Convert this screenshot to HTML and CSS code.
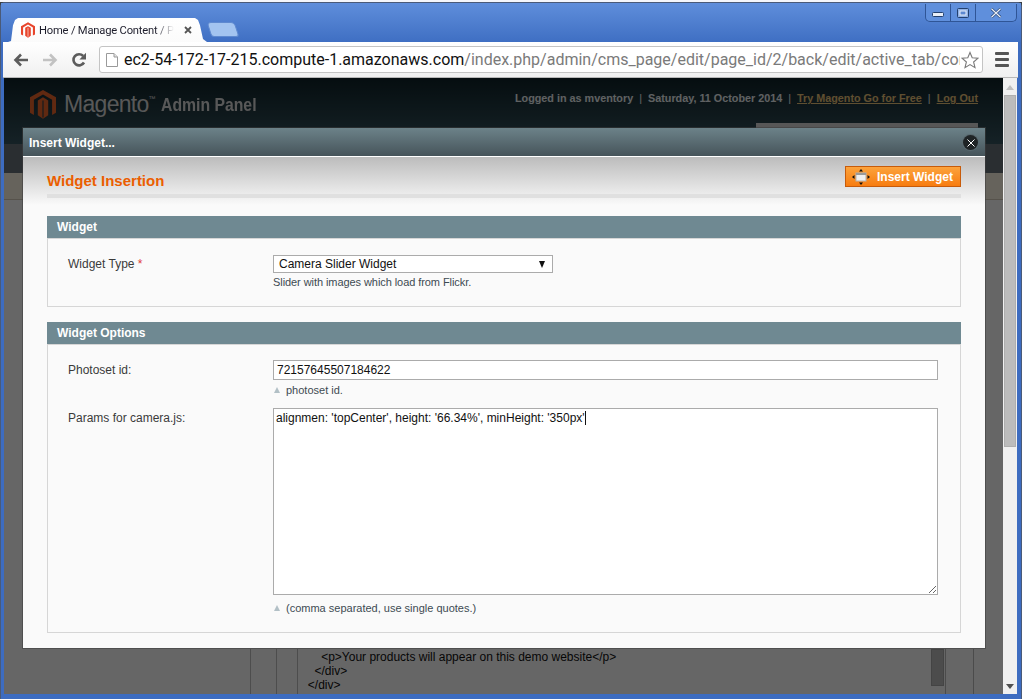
FILE: index.html
```html
<!DOCTYPE html>
<html lang="en">
<head>
<meta charset="utf-8">
<title>Home / Manage Content / Pages</title>
<link rel="stylesheet" href="styles.css">
</head>
<body>
<div class="desktop-strip"></div>
<div class="window">
  <div class="titlebar">
    <div class="tab">
      <svg class="favicon" viewBox="0 0 16 18" width="14" height="16"><path d="M8 0 16 4.6V14L13.6 15.4V6L8 2.8 2.4 6V15.4L0 14V4.6Z" fill="#e8452c"/><path d="M8 4.600 11.200 6.500V15.600L8 17.800 4.800 15.600V6.500Z" fill="#e8452c"/><path d="M8 6.500V16.800" stroke="#fff" stroke-width=".7"/></svg>
      <span class="tab-title">Home / Manage Content / Pages</span>
      <svg class="tab-close" viewBox="0 0 8 8" width="8" height="8"><path d="M1 1 7 7M7 1 1 7" stroke="#555" stroke-width="1.8"/></svg>
    </div>
    <div class="new-tab"></div>
    <div class="win-controls">
      <div class="win-btn win-min"><svg viewBox="0 0 12 6" width="12" height="6"><rect x=".5" y=".5" width="11" height="4" rx="1" fill="#e8eef8" stroke="#23406e"/></svg></div>
      <div class="win-btn win-max"><svg viewBox="0 0 12 10" width="12" height="10"><rect x=".5" y=".5" width="11" height="9" rx="1" fill="#8fb0e4" stroke="#23406e"/><rect x="3" y="3" width="6" height="4" fill="#5c88d0" stroke="#e8eef8"/></svg></div>
      <div class="win-btn win-close"><svg viewBox="0 0 12 10" width="12" height="10"><path d="M1.500 .8 10.500 9.200M10.500 .8 1.500 9.200" stroke="#23406e" stroke-width="2.600"/><path d="M1.500 .8 10.500 9.200M10.500 .8 1.500 9.200" stroke="#e8eef8" stroke-width="1.300"/></svg></div>
    </div>
  </div>
  <div class="toolbar">
    <svg class="tool-icon" viewBox="0 0 16 14" width="16" height="14"><path d="M15 7H3M8 1.500 2.500 7 8 12.500" fill="none" stroke="#5c5c5c" stroke-width="2.600"/></svg>
    <svg class="tool-icon" viewBox="0 0 16 14" width="16" height="14"><path d="M1 7H13M8 1.500 13.500 7 8 12.500" fill="none" stroke="#c2c2c2" stroke-width="2.600"/></svg>
    <svg class="tool-icon" viewBox="0 0 16 16" width="16" height="16"><path d="M13 10.500A5.600 5.600 0 1 1 12.200 4" fill="none" stroke="#5c5c5c" stroke-width="2.600"/><path d="M15 .8V7.500H8.400Z" fill="#5c5c5c"/></svg>
    <div class="omnibox">
      <svg class="page-icon" viewBox="0 0 12 14" width="12" height="14"><path d="M.5.5H8L11.500 4V13.500H.5Z" fill="#fff" stroke="#9a9a9a"/><path d="M8 .5V4H11.500" fill="#e4e4e4" stroke="#9a9a9a"/></svg>
      <div class="url"><span class="url-host">ec2-54-172-17-215.compute-1.amazonaws.com</span>/index.php/admin/cms_page/edit/page_id/2/back/edit/active_tab/content/</div>
      <svg class="star" viewBox="0 0 18 18" width="18" height="18"><path d="M9 1.500 11.200 6.800 17 7.200 12.600 11 14 16.600 9 13.600 4 16.600 5.400 11 1 7.200 6.800 6.800Z" fill="#fff" stroke="#7a7a7a" stroke-width="1.100"/></svg>
    </div>
    <div class="menu-icon"><span></span><span></span><span></span></div>
  </div>
  <div class="viewport">
    <div class="page">
      <header class="admin-header">
        <div class="logo">
          <svg viewBox="0 0 16 18" width="26" height="31"><path d="M8 0 16 4.600V14L13.600 15.400V6L8 2.800 2.400 6V15.400L0 14V4.600Z" fill="#f0662c"/><path d="M8 4.600 11.200 6.500V15.600L8 17.800 4.800 15.600V6.500Z" fill="#f0662c"/><path d="M8 6.500V17" stroke="#2a444c" stroke-width=".7"/></svg>
          <span class="logo-name">Magento<sup class="tm">™</sup></span>
          <span class="logo-sub">Admin Panel</span>
        </div>
        <div class="header-right">
          <div class="header-links">
            <span>Logged in as mventory</span><i>|</i><span>Saturday, 11 October 2014</span><i>|</i><a class="go">Try Magento Go for Free</a><i>|</i><a class="go">Log Out</a>
          </div>
          <div class="search-box"></div>
        </div>
      </header>
      <div class="nav-bar"></div>
      <div class="tan-bar"></div>
      <div class="page-body">
        <div class="col-lines">
          <div class="col-a"></div>
          <div class="col-b"></div>
          <pre class="code">    &lt;p&gt;Your products will appear on this demo website&lt;/p&gt;
  &lt;/div&gt;
&lt;/div&gt;</pre>
          <div class="code-scroll"></div>
          <div class="col-c"></div>
          <div class="col-d"></div>
        </div>
      </div>
    </div>
    <div class="scrollbar">
      <div class="scroll-up"></div>
      <div class="scroll-thumb"></div>
      <div class="scroll-down"></div>
    </div>

    <div class="overlay"></div>

    <section class="modal">
      <div class="modal-title">
        <span>Insert Widget...</span>
        <span class="modal-close"><svg viewBox="0 0 8 8" width="8" height="8"><path d="M.5.5 7.500 7.500M7.500.5.5 7.500" stroke="#fff" stroke-width="1"/></svg></span>
      </div>
      <div class="modal-body">
        <div class="content-head">
          <h3>Widget Insertion</h3>
          <button class="btn-insert" type="button">
            <svg viewBox="0 0 18 16" width="18" height="16"><rect x="4" y="4" width="10" height="8" fill="#f0f0f0" stroke="#b0b0b0"/><rect x="4" y="4" width="10" height="2" fill="#9a9a9a"/><path d="M9 0 11 2.500H7ZM9 16 7 13.500H11ZM0 8 2.500 6V10ZM18 8 15.500 10V6Z" fill="#111"/></svg>
            Insert Widget
          </button>
        </div>

        <div class="fieldset-head">Widget</div>
        <div class="fieldset fs-type">
          <div class="row">
            <label class="lbl">Widget Type <em>*</em></label>
            <div class="val">
              <div class="select"><span>Camera Slider Widget</span><span class="select-arrow"></span></div>
              <p class="note note-type">Slider with images which load from Flickr.</p>
            </div>
          </div>
        </div>

        <div class="fieldset-head">Widget Options</div>
        <div class="fieldset fs-opts">
          <div class="row row-photo">
            <label class="lbl lbl-offset">Photoset id:</label>
            <div class="val">
              <input class="text-in" type="text" value="72157645507184622">
              <p class="note hint">photoset id.</p>
            </div>
          </div>
          <div class="row">
            <label class="lbl lbl-offset">Params for camera.js:</label>
            <div class="val">
              <div class="area-wrap">
                <textarea class="text-area">alignmen: 'topCenter', height: '66.34%', minHeight: '350px'</textarea>
                <span class="caret"></span>
              </div>
              <p class="note hint hint-area">(comma separated, use single quotes.)</p>
            </div>
          </div>
        </div>
      </div>
    </section>
  </div>
</div>
</body>
</html>
```
FILE: styles.css
```css
* { box-sizing: border-box; }
html, body { margin: 0; height: 100%; overflow: hidden; }
body { background: #3a3f44; font-family: "Liberation Sans", Arial, sans-serif; font-size: 12px; color: #2f2f2f; }

.desktop-strip { height: 2px; background: #f4f6fb; }
.window {
  height: 697px; display: flex; flex-direction: column;
  background: #3d6cc0; border: 1px solid #4a5a78; border-bottom: 0; border-radius: 5px 5px 0 0;
  padding: 0 4px 5px 3px;
}

.titlebar {
  height: 39px; flex: none; display: flex; align-items: flex-end; position: relative;
  margin: 0 -4px 0 -3px; padding: 0 4px 0 7px;
  background: linear-gradient(#5f8edb, #3f6fc3);
}
.tab {
  width: 199px; height: 24px; background: linear-gradient(#fff, #fbfbfb);
  display: flex; align-items: center; padding: 0 15px 0 13px; gap: 4px;
  clip-path: polygon(0 100%, 3px 96%, 5px 30%, 7px 8%, 10px 0, 187px 0, 190px 8%, 192px 30%, 195px 88%, 199px 100%);
}
.favicon { flex: none; }
.tab-title {
  flex: 1; min-width: 0; overflow: hidden; white-space: nowrap; font-family: Roboto, sans-serif; font-size: 11.2px; letter-spacing: -.2px; color: #1d1d2b;
  -webkit-mask-image: linear-gradient(90deg, #000 86%, transparent);
  mask-image: linear-gradient(90deg, #000 86%, transparent);
}
.tab-close { flex: none; margin-left: 6px; }
.new-tab {
  width: 28px; height: 15px; margin: 0 0 5px 2px; background: #a3c4f0; border-radius: 4px 4px 3px 3px;
  transform: skewX(18deg); border: 1px solid #5f8ad0;
}
.win-controls {
  position: absolute; top: 1px; right: 4px; height: 18px; display: flex;
  border: 1px solid #2f5596; border-top: 0; border-radius: 0 0 5px 5px; background: #5f8fdc; overflow: hidden;
}
.win-btn { height: 100%; display: flex; align-items: center; justify-content: center; border-left: 1px solid #2f5596; }
.win-min { width: 24px; border-left: 0; padding-top: 4px; }
.win-max { width: 25px; }
.win-close { width: 41px; }

.toolbar {
  height: 36px; flex: none; display: flex; align-items: center; padding: 0 0 0 10px; gap: 13px;
  margin: 0 -1px;
  background: linear-gradient(#fff, #f0f0f0); border-bottom: 1px solid #b8b8b8;
}
.tool-icon { flex: none; }
.omnibox {
  width: 884px; height: 27px; flex: none; display: flex; align-items: center; margin-left: -1px;
  background: #fff; border: 1px solid #c4c4c4; border-radius: 3px; padding: 0 3px 0 6px;
}
.page-icon { flex: none; margin-right: 6px; }
.url {
  flex: 1; overflow: hidden; white-space: nowrap; font-family: Roboto, sans-serif; font-size: 16px; color: #7a7a7a; min-width: 0;
}
.url-host { color: #111; }
.star { flex: none; margin-left: 1px; }
.menu-icon { width: 14px; display: flex; flex-direction: column; gap: 3px; margin-left: -1px; }
.menu-icon span { height: 3px; background: #555; border-radius: 1px; }

.viewport { flex: 1; min-height: 0; position: relative; display: flex; background: #fff; }
.page { flex: 1; min-width: 0; display: flex; flex-direction: column; background: #fff; }
.admin-header {
  height: 66px; flex: none; display: flex; justify-content: space-between;
  background: linear-gradient(#0f2329, #365560); padding-left: 26px;
}
.logo { display: flex; align-items: center; gap: 8px; height: 52px; }
.logo-name { font-size: 23px; color: #dcdcdc; letter-spacing: -.7px; margin-right: -2px; }
.tm { font-size: 7px; vertical-align: 11px; line-height: 0; }
.logo-sub { font-size: 19px; font-weight: bold; color: #dcdcdc; padding-top: 2px; transform: scaleX(.83); transform-origin: left center; }
.header-right { display: flex; flex-direction: column; align-items: flex-end; padding-right: 25px; }
.header-links { font-size: 10.8px; font-weight: bold; color: #eef3f5; padding-top: 14px; height: 45px; white-space: nowrap; }
.header-links i { font-style: normal; font-weight: normal; margin: 0 6px; }
.go { color: #eec67a; text-decoration: underline; }
.search-box { width: 222px; flex: 1; background: #dadada; }
.nav-bar { height: 29px; flex: none; background: #69737a; }
.tan-bar { height: 27px; flex: none; background: #fff8e6; border-bottom: 1px solid #d6cdbc; }
.page-body { flex: 1; min-height: 0; display: flex; flex-direction: column; justify-content: flex-end; background: #fff; }
.col-lines { display: flex; height: 45px; padding-left: 246px; }
.col-a { width: 26px; border-left: 1px solid #c0c0c0; }
.col-b { width: 21px; border-left: 1px solid #c0c0c0; }
.code {
  width: 628px; margin: 0; padding: 1px 0 0 10px; border-left: 1px solid #c0c0c0; font-family: "Liberation Sans", sans-serif; font-size: 12px; line-height: 14px; color: #111;
}
.code-scroll { width: 13px; height: 37px; background: #bdbdbd; border: 1px solid #aaa; margin-left: 9px; }
.col-c { width: 28px; margin-left: 1px; border-left: 1px solid #bbb; }
.col-d { width: 30px; border-left: 1px solid #bbb; }

.scrollbar { width: 14px; flex: none; display: flex; flex-direction: column; align-items: center; background: #f0f0f0; z-index: 1; position: relative; padding: 0 1px; }
.scroll-up { width: 0; height: 0; margin: 7px 0 5px; border: 4px solid transparent; border-top: 0; border-bottom: 5px solid #bfbfbf; }
.scroll-thumb { width: 12px; height: 352px; background: #bcbcbc; border: 1px solid #aeaeae; }
.scroll-down { width: 0; height: 0; margin-top: auto; margin-bottom: 5px; border: 4px solid transparent; border-bottom: 0; border-top: 5px solid #505050; }

.overlay { position: absolute; inset: 0 14px 0 0; background: rgba(0,0,0,.6); }

.modal {
  position: absolute; left: 19px; top: 50px; width: 962px; height: 520px; display: flex; flex-direction: column;
  box-shadow: 0 0 0 1px rgba(60,60,60,.55); z-index: 2;
}
.modal-title {
  height: 29px; flex: none; display: flex; align-items: center; justify-content: space-between; padding: 1px 7px 0 6px;
  background: linear-gradient(#6c8289, #46545a); color: #fff; font-weight: bold; font-size: 12px;
  border-bottom: 1px solid #fff;
}
.modal-close {
  width: 15px; height: 15px; border-radius: 50%; background: #1f2426; box-shadow: 0 0 0 1px #5a6a70; display: flex; align-items: center; justify-content: center;
}
.modal-body {
  flex: 1; min-height: 0; padding: 0 24px;
  background: linear-gradient(#bcbcbc, #fafafa 48px); overflow: hidden;
}
.content-head {
  height: 41px; display: flex; justify-content: space-between; align-items: flex-start;
  border-bottom: 4px solid #e0e0e0; margin-bottom: 18px;
}
.content-head h3 { margin: 15px 0 0; font-size: 15px; line-height: 18px; font-weight: bold; color: #eb5e00; }
.btn-insert {
  width: 116px; height: 21px; margin-top: 9px; padding: 0 0 0 6px; display: flex; align-items: center; gap: 7px;
  background: linear-gradient(#fca33c, #f77c10); border: 1px solid #c75b0a; color: #fff;
  font-family: "Liberation Sans", sans-serif; font-size: 12px; font-weight: bold;
}
.fieldset-head { height: 22px; background: #6f8992; color: #fff; font-weight: bold; font-size: 12px; line-height: 22px; padding-left: 10px; }
.fieldset { background: #fafafa; border: 1px solid #d6d6d6; padding: 0 22px 0 20px; }
.fs-type { height: 69px; margin-bottom: 15px; padding-top: 16px; }
.fs-opts { height: 289px; padding-top: 15px; }
.row { display: flex; }
.row-photo { margin-bottom: 11px; }
.lbl { width: 205px; flex: none; line-height: 18px; color: #3a3a3a; font-size: 12px; }
.lbl-offset { padding-top: 1px; }
.lbl em { color: #e03a3a; font-style: normal; }
.val { flex: 1; min-width: 0; }
.select {
  width: 280px; height: 18px; background: #fff; border: 1px solid #ababab; display: flex; justify-content: space-between; align-items: center;
  padding: 0 7px 0 5px; color: #111; font-size: 12px;
}
.select-arrow { width: 0; height: 0; border: 3.500px solid transparent; border-bottom: 0; border-top: 7px solid #111; }
.note { margin: 2px 0 0; font-size: 11px; line-height: 14px; color: #3d4a52; }
.note-type { letter-spacing: -.07px; }
.hint { padding-left: 13px; position: relative; margin-top: 3px; }
.hint::before {
  content: ""; position: absolute; left: 1px; top: 4px; border: 3.500px solid transparent; border-top: 0; border-bottom: 6px solid #b2c0c6;
}
.hint-area { margin-top: 6px; }
.text-in {
  display: block; width: 665px; height: 20px; padding: 0 3px; border: 1px solid #ababab; background: #fff; color: #111;
  font-family: "Liberation Sans", sans-serif; font-size: 12px; outline: 0;
}
.area-wrap { position: relative; width: 665px; height: 187px; }
.text-area {
  display: block; width: 665px; height: 187px; padding: 2px 2px; border: 1px solid #ababab; background: #fff; color: #111;
  font-family: "Liberation Sans", sans-serif; font-size: 12px; line-height: 14px; outline: 0; margin: 0;
}
.caret { position: absolute; left: 312px; top: 3px; width: 1px; height: 14px; background: #111; }
```
